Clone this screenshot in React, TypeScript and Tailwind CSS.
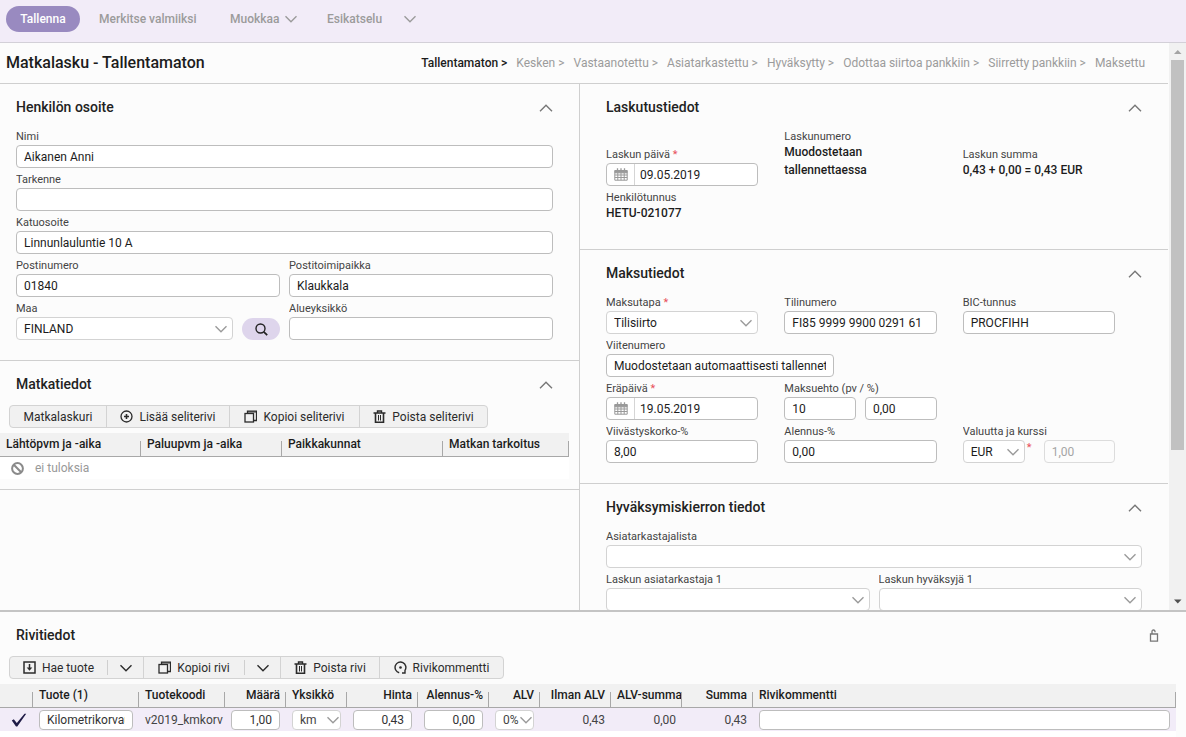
import React, { useId } from 'react';
import { clsx } from 'clsx';

const steps = [
    'Tallentamaton',
    'Kesken',
    'Vastaanotettu',
    'Asiatarkastettu',
    'Hyväksytty',
    'Odottaa siirtoa pankkiin',
    'Siirretty pankkiin',
    'Maksettu',
];

const tripColumns = [
    { title: 'Lähtöpvm ja -aika', width: 'w-[141px]' },
    { title: 'Paluupvm ja -aika', width: 'w-[141px]' },
    { title: 'Paikkakunnat', width: 'w-[161px]' },
    { title: 'Matkan tarkoitus', width: '' },
];

const rowColumns = [
    { title: '', width: 'w-[33px]', right: false },
    { title: 'Tuote (1)', width: 'w-[106px]', right: false },
    { title: 'Tuotekoodi', width: 'w-[86px]', right: false },
    { title: 'Määrä', width: 'w-[61px]', right: true },
    { title: 'Yksikkö', width: 'w-[61px]', right: false },
    { title: 'Hinta', width: 'w-[71px]', right: true },
    { title: 'Alennus-%', width: 'w-[71px]', right: true },
    { title: 'ALV', width: 'w-[51px]', right: true },
    { title: 'Ilman ALV', width: 'w-[71px]', right: true },
    { title: 'ALV-summa', width: 'w-[71px]', right: true },
    { title: 'Summa', width: 'w-[71px]', right: true },
    { title: 'Rivikommentti', width: '', right: false },
];

const inputClass = 'block h-[23px] w-full min-w-0 rounded border border-[#bdbdbd] bg-white px-[7px] text-[12px] text-[#1c1c1c] outline-none';

/* ---------- icons ---------- */

const Chevron = ({ up = false, className = '' }: { up?: boolean; className?: string }) => (
    <svg viewBox="0 0 14 8" className={clsx('h-2 w-3.5 shrink-0', className)} fill="none" stroke="currentColor" strokeWidth="1.4">
        <path d={up ? 'M1 7.2 7 1.2l6 6' : 'M1.5 1.2 7 6.8l5.5-5.6'} />
    </svg>
);

const PlusCircleIcon = () => (
    <svg viewBox="0 0 13 13" className="size-[13px]" fill="none" stroke="currentColor" strokeWidth="1.3">
        <circle cx="6.5" cy="6.5" r="5.5" />
        <path d="M6.5 4v5M4 6.5h5" strokeWidth="1.6" />
    </svg>
);

const CopyIcon = () => (
    <svg viewBox="0 0 13 13" className="size-[13px]" fill="none" stroke="currentColor" strokeWidth="1.3">
        <rect x="1" y="3.5" width="8.5" height="8.5" />
        <path d="M3.5 3.5V1.2h9v9.3h-3" />
        <path d="M3.5 2h9" strokeWidth="1" />
    </svg>
);

const TrashIcon = () => (
    <svg viewBox="0 0 13 13" className="size-[13px]" fill="none" stroke="currentColor" strokeWidth="1.4">
        <path d="M.5 3h12M4.500 3V1h4v2" />
        <path d="M2.500 3v9.200h8V3" strokeWidth="1.6" />
        <path d="M5.500 5v5.500M7.500 5v5.500" strokeWidth="1" />
    </svg>
);

const FetchIcon = () => (
    <svg viewBox="0 0 13 13" className="size-[13px]" fill="none" stroke="currentColor" strokeWidth="1.5">
        <rect x="1" y="1" width="11" height="11" />
        <path d="M6.5 3v5" />
        <path d="M3.7 6.500h5.600L6.500 9.800z" fill="currentColor" stroke="none" />
    </svg>
);

const CommentIcon = () => (
    <svg viewBox="0 0 13 13" className="size-[13px]" fill="none" stroke="currentColor" strokeWidth="1.4">
        <path d="M5.200 11.700A5.400 5.400 0 1 1 11 9.400V12H8" />
        <circle cx="6.500" cy="6.500" r="1.300" fill="currentColor" stroke="none" />
    </svg>
);

const SearchIcon = () => (
    <svg viewBox="0 0 13 13" className="size-[13px]" fill="none" stroke="currentColor" strokeWidth="1.4">
        <circle cx="5.500" cy="5.500" r="4.500" />
        <path d="M8.800 8.800l3.400 3.400" strokeWidth="1.700" />
    </svg>
);

const CalendarIcon = () => (
    <svg viewBox="0 0 14 13" className="h-[13px] w-3.5" fill="none" stroke="currentColor">
        <path d="M1 2.500h12v2.300H1z" fill="currentColor" />
        <path d="M.8 2.500h12.400v9.700H.8zM.8 7h12.400M.8 9.500h12.400M3.800 4.500v7.700M7 4.500v7.700M10.200 4.500v7.700" />
        <path d="M3.500.3v2.500M10.500.3v2.500M7 .3v2.500" strokeWidth="1.300" />
    </svg>
);

const NoneIcon = () => (
    <svg viewBox="0 0 13 13" className="size-[13px] text-[#8a8a8a]" fill="none" stroke="currentColor" strokeWidth="2">
        <circle cx="6.500" cy="6.500" r="5.400" />
        <path d="M2.800 2.800l7.400 7.400" />
    </svg>
);

const LockIcon = () => (
    <svg viewBox="0 0 10 13" className="h-[13px] w-2.5 text-[#777]" fill="none" stroke="currentColor" strokeWidth="1.300">
        <path d="M1.500 5h7v7.200h-7z" />
        <path d="M3 5V2.500Q3 1 4.500 1T6 2.500V3.200" />
    </svg>
);

const CheckIcon = () => (
    <svg viewBox="0 0 16 14" className="h-3.5 w-4 text-[#1f1b46]" fill="currentColor">
        <path d="M.8 7.500l2-1.200 3 3.700L13.500.8h1.700L6.300 13.500H5z" />
    </svg>
);

/* ---------- form parts ---------- */

type FieldProps = { label: string; value?: string; required?: boolean; className?: string };

const Label = ({ id, label, required }: { id: string; label: string; required?: boolean }) => (
    <label htmlFor={id} className="block h-5 truncate text-[11px] leading-6 text-[#444]">
        {label}
        {required && <span className="text-[#e8505b]"> *</span>}
    </label>
);

const TextField = ({ label, value = '', required, className }: FieldProps) => {
    const id = useId();
    return (
        <div className={className}>
            <Label id={id} label={label} required={required} />
            <input id={id} defaultValue={value} className={inputClass} />
        </div>
    );
};

const DateField = ({ label, value = '', required }: FieldProps) => {
    const id = useId();
    return (
        <div>
            <Label id={id} label={label} required={required} />
            <div className="flex h-[23px] overflow-hidden rounded border border-[#bdbdbd] bg-white">
                <button type="button" aria-label="Avaa kalenteri" className="flex w-7 shrink-0 items-center justify-center border-r border-[#d5d5d5] text-[#999]">
                    <CalendarIcon />
                </button>
                <input id={id} defaultValue={value} className="w-full min-w-0 px-[5px] text-[12px] text-[#1c1c1c] outline-none" />
            </div>
        </div>
    );
};

const Select = ({ id, value = '', name, small = false }: { id?: string; value?: string; name?: string; small?: boolean }) => (
    <div className="relative">
        <select
            id={id}
            aria-label={name}
            className={clsx(
                'block w-full appearance-none rounded border border-[#d3d3d3] bg-white px-[7px] text-[12px] outline-none',
                small ? 'h-5 text-[#444]' : 'h-[23px] text-[#1c1c1c]',
            )}
        >
            <option>{value}</option>
        </select>
        <Chevron className={clsx('pointer-events-none absolute text-[#9b9b9b]', small ? 'right-px top-1.5' : 'right-[5px] top-2')} />
    </div>
);

const SelectField = ({ label, value, required, className }: FieldProps) => {
    const id = useId();
    return (
        <div className={className}>
            <Label id={id} label={label} required={required} />
            <Select id={id} value={value} />
        </div>
    );
};

const ValueField = ({ label, children }: { label: string; children: React.ReactNode }) => (
    <div className="pb-[7px]">
        <div className="h-[18px] text-[11px] leading-6 text-[#444]">{label}</div>
        <div className="text-[12px] leading-[18px] font-medium text-[#1c1c1c]">{children}</div>
    </div>
);

const Section = ({ title, children, className }: { title: string; children: React.ReactNode; className: string }) => (
    <section className="border-b border-[#cfcfcf]">
        <div className={clsx('flex h-[41px] items-center justify-between pt-1.5', className)}>
            <h2 className="text-[14px] font-medium text-[#222]">{title}</h2>
            <button type="button" aria-label={`Pienennä ${title}`} className="text-[#777]">
                <Chevron up />
            </button>
        </div>
        {children}
    </section>
);

const ToolButton = ({ icon, children, className }: { icon?: React.ReactNode; children: React.ReactNode; className: string }) => (
    <button type="button" className={clsx('flex h-full items-center justify-center gap-1.5 whitespace-nowrap', className)}>
        {icon}
        {children}
    </button>
);

const Toolbar = ({ children }: { children: React.ReactNode }) => (
    <div className="mt-[3px] mb-[5px] ml-[9px] flex h-[23px] w-fit rounded border border-[#d3d3d3] bg-[#f1f1f1] text-[12px] text-[#2b2b2b]">
        {children}
    </div>
);

const HeadCell = ({ title, width, right = false }: { title: string; width: string; right?: boolean }) => (
    <th
        className={clsx(
            'relative h-6 border-b border-[#a8a8a8] px-1.5 py-0 text-[12px] leading-[22px] font-medium whitespace-nowrap align-top',
            'after:absolute after:right-0 after:bottom-0 after:h-[15px] after:w-px after:bg-[#a8a8a8]',
            width,
            right ? 'text-right' : 'text-left',
        )}
    >
        {title}
    </th>
);

const CellInput = ({ name, value, right = false }: { name: string; value: string; right?: boolean }) => (
    <input
        aria-label={name}
        defaultValue={value}
        className={clsx(
            'block h-5 w-full min-w-0 rounded border border-[#bdbdbd] bg-white px-[7px] text-[12px] text-[#333] outline-none',
            right && 'text-right',
        )}
    />
);

/* ---------- page ---------- */

const AddressSection = () => (
    <Section title="Henkilön osoite" className="pr-[26px] pl-4">
        <div className="grid grid-cols-2 gap-x-[9px] pr-[26px] pb-5 pl-4">
            <TextField label="Nimi" value="Aikanen Anni" className="col-span-2" />
            <TextField label="Tarkenne" className="col-span-2" />
            <TextField label="Katuosoite" value="Linnunlauluntie 10 A" className="col-span-2" />
            <TextField label="Postinumero" value="01840" />
            <TextField label="Postitoimipaikka" value="Klaukkala" />
            <div className="flex items-end gap-[9px]">
                <SelectField label="Maa" value="FINLAND" className="flex-1" />
                <button type="button" aria-label="Hae maa" className="flex h-[22px] w-[38px] items-center justify-center rounded-full bg-[#ded5ec] text-[#222]">
                    <SearchIcon />
                </button>
            </div>
            <TextField label="Alueyksikkö" />
        </div>
    </Section>
);

const TripSection = () => (
    <Section title="Matkatiedot" className="pr-[26px] pl-4">
        <Toolbar>
            <ToolButton className="w-24">Matkalaskuri</ToolButton>
            <ToolButton icon={<PlusCircleIcon />} className="w-[123px] border-l border-[#d3d3d3]">Lisää seliterivi</ToolButton>
            <ToolButton icon={<CopyIcon />} className="w-[130px] border-l border-[#d3d3d3]">Kopioi seliterivi</ToolButton>
            <ToolButton icon={<TrashIcon />} className="w-32 border-l border-[#d3d3d3]">Poista seliterivi</ToolButton>
        </Toolbar>
        <div className="pr-2.5 pb-2.5">
            <table className="w-full table-fixed border-separate border-spacing-0">
                <thead className="bg-[#f1f1f1]">
                    <tr>
                        {tripColumns.map((col) => (
                            <HeadCell key={col.title} title={col.title} width={col.width} />
                        ))}
                    </tr>
                </thead>
                <tbody>
                    <tr className="bg-white">
                        <td colSpan={4} className="h-[22px] p-0">
                            <div className="flex items-center gap-[11px] pl-[11px] text-[12px] leading-[22px] text-[#999]">
                                <NoneIcon />
                                ei tuloksia
                            </div>
                        </td>
                    </tr>
                </tbody>
            </table>
        </div>
    </Section>
);

const BillingSection = () => (
    <Section title="Laskutustiedot" className="px-[26px]">
        <div className="grid grid-cols-3 items-end gap-x-[26px] pr-[53px] pb-5 pl-[26px]">
            <DateField label="Laskun päivä" value="09.05.2019" required />
            <ValueField label="Laskunumero">
                Muodostetaan
                <br />
                tallennettaessa
            </ValueField>
            <ValueField label="Laskun summa">0,43 + 0,00 = 0,43 EUR</ValueField>
            <ValueField label="Henkilötunnus">HETU-021077</ValueField>
        </div>
    </Section>
);

const PaymentSection = () => {
    const termId = useId();
    const currencyId = useId();
    return (
        <Section title="Maksutiedot" className="px-[26px]">
            <div className="grid grid-cols-3 gap-x-[26px] pr-[53px] pb-5 pl-[26px]">
                <SelectField label="Maksutapa" value="Tilisiirto" required />
                <TextField label="Tilinumero" value="FI85 9999 9900 0291 61" />
                <TextField label="BIC-tunnus" value="PROCFIHH" />
                <TextField label="Viitenumero" value="Muodostetaan automaattisesti tallennettaessa" className="col-span-3 w-[228px]" />
                <DateField label="Eräpäivä" value="19.05.2019" required />
                <div>
                    <Label id={termId} label="Maksuehto (pv / %)" />
                    <div className="grid grid-cols-2 gap-[9px]">
                        <input id={termId} defaultValue="10" className={inputClass} />
                        <input aria-label="Maksuehto %" defaultValue="0,00" className={inputClass} />
                    </div>
                </div>
                <div />
                <TextField label="Viivästyskorko-%" value="8,00" />
                <TextField label="Alennus-%" value="0,00" />
                <div>
                    <Label id={currencyId} label="Valuutta ja kurssi" />
                    <div className="flex">
                        <div className="w-[62px] shrink-0">
                            <Select id={currencyId} value="EUR" />
                        </div>
                        <span className="w-[19px] shrink-0 pl-0.5 text-[11px] text-[#e8505b]">*</span>
                        <input
                            aria-label="Kurssi"
                            disabled
                            defaultValue="1,00"
                            className="h-[23px] w-full min-w-0 rounded border border-[#dcdcdc] bg-[#fcfcfc] px-[7px] text-[12px] text-[#a5a5a5]"
                        />
                    </div>
                </div>
            </div>
        </Section>
    );
};

const ApprovalSection = () => (
    <Section title="Hyväksymiskierron tiedot" className="px-[26px]">
        <div className="grid grid-cols-2 gap-x-[9px] px-[26px] pb-5">
            <SelectField label="Asiatarkastajalista" className="col-span-2" />
            <SelectField label="Laskun asiatarkastaja 1" />
            <SelectField label="Laskun hyväksyjä 1" />
        </div>
    </Section>
);

const RowsPanel = () => (
    <section className="shrink-0 border-t-2 border-[#c4c4c4]">
        <div className="flex h-[41px] items-center justify-between pt-1.5 pr-[27px] pl-4">
            <h2 className="text-[14px] font-medium text-[#222]">Rivitiedot</h2>
            <button type="button" aria-label="Lukitse">
                <LockIcon />
            </button>
        </div>
        <Toolbar>
            <ToolButton icon={<FetchIcon />} className="w-[97px]">Hae tuote</ToolButton>
            <div className="my-[3px] w-px bg-[#cfcfcf]" />
            <button type="button" aria-label="Hae tuote, valikko" className="flex w-[35px] items-center justify-center">
                <Chevron />
            </button>
            <ToolButton icon={<CopyIcon />} className="w-[101px] border-l border-[#d3d3d3]">Kopioi rivi</ToolButton>
            <div className="my-[3px] w-px bg-[#cfcfcf]" />
            <button type="button" aria-label="Kopioi rivi, valikko" className="flex w-[35px] items-center justify-center">
                <Chevron />
            </button>
            <ToolButton icon={<TrashIcon />} className="w-[99px] border-l border-[#d3d3d3]">Poista rivi</ToolButton>
            <ToolButton icon={<CommentIcon />} className="w-[124px] border-l border-[#d3d3d3]">Rivikommentti</ToolButton>
        </Toolbar>
        <div className="mr-2.5 bg-white pb-1.5">
            <table className="w-full table-fixed border-separate border-spacing-0">
                <thead className="bg-[#f1f1f1]">
                    <tr>
                        {rowColumns.map((col) => (
                            <HeadCell key={col.title} title={col.title} width={col.width} right={col.right} />
                        ))}
                    </tr>
                </thead>
                <tbody>
                    <tr className="h-[23px] bg-[#f2ecf8] text-[12px] text-[#444] *:px-1.5 *:py-0">
                        <td>
                            <div className="flex justify-end"><CheckIcon /></div>
                        </td>
                        <td><CellInput name="Tuote" value="Kilometrikorvaus" /></td>
                        <td className="overflow-hidden whitespace-nowrap">v2019_kmkorv</td>
                        <td><CellInput name="Määrä" value="1,00" right /></td>
                        <td><Select name="Yksikkö" value="km" small /></td>
                        <td><CellInput name="Hinta" value="0,43" right /></td>
                        <td><CellInput name="Alennus-%" value="0,00" right /></td>
                        <td><Select name="ALV" value="0%" small /></td>
                        <td className="text-right">0,43</td>
                        <td className="text-right">0,00</td>
                        <td className="text-right">0,43</td>
                        <td><CellInput name="Rivikommentti" value="" /></td>
                    </tr>
                </tbody>
            </table>
        </div>
    </section>
);

export default function App() {
    return (
        <div className="flex h-screen flex-col overflow-hidden bg-[#fcfcfc] font-['Roboto',sans-serif] text-[#1c1c1c]">
            <header className="flex h-[43px] shrink-0 items-start border-b border-[#d3d0d8] bg-[#f2ecf8] px-1.5 pt-1.5 text-[12px] font-medium text-[#9b9b9b]">
                <button type="button" className="h-[26px] w-[74px] rounded-full bg-[#998ac0] text-white">Tallenna</button>
                <button type="button" className="ml-[19px] h-[26px] w-[100px] text-left whitespace-nowrap">Merkitse valmiiksi</button>
                <button type="button" className="ml-[31px] flex h-[26px] w-[68px] items-center justify-between">
                    Muokkaa
                    <Chevron />
                </button>
                <button type="button" className="ml-[29px] h-[26px] w-14 text-left">Esikatselu</button>
                <button type="button" aria-label="Esikatselu, valikko" className="ml-5 flex h-[26px] items-center">
                    <Chevron />
                </button>
            </header>

            <main className="flex min-h-0 flex-1">
                <div className="flex min-w-0 flex-1 flex-col overflow-hidden">
                    <div className="flex h-[41px] shrink-0 items-center justify-between border-b border-[#cfcfcf] pr-[23px] pl-1.5">
                        <h1 className="text-[16px] font-medium">Matkalasku - Tallentamaton</h1>
                        <ol className="flex gap-[9px] text-[12px] text-[#9b9b9b]">
                            {steps.map((step, i) => (
                                <li key={step} className={clsx(i === 0 && 'font-medium text-[#1c1c1c]')}>
                                    {step}
                                    {i < steps.length - 1 && ' >'}
                                </li>
                            ))}
                        </ol>
                    </div>
                    <div className="grid min-h-0 flex-1 grid-cols-[minmax(0,580fr)_minmax(0,588fr)]">
                        <div className="border-r border-[#cfcfcf]">
                            <AddressSection />
                            <TripSection />
                        </div>
                        <div className="min-h-0 overflow-hidden">
                            <BillingSection />
                            <PaymentSection />
                            <ApprovalSection />
                        </div>
                    </div>
                </div>
                <div className="flex w-[18px] flex-col items-center border-l border-[#fcfcfc] bg-[#f1f1f1]">
                    <svg viewBox="0 0 17 17" className="size-[17px] shrink-0 fill-[#a3a3a3]"><path d="M5 11h7.500L8.750 7z" /></svg>
                    <div className="h-[390px] w-[13px] shrink-0 bg-[#c1c1c1]" />
                    <div className="flex-1" />
                    <svg viewBox="0 0 17 17" className="size-[17px] shrink-0 fill-[#505050]"><path d="M5 6.500h7.500L8.750 10.500z" /></svg>
                </div>
            </main>

            <RowsPanel />
        </div>
    );
}
